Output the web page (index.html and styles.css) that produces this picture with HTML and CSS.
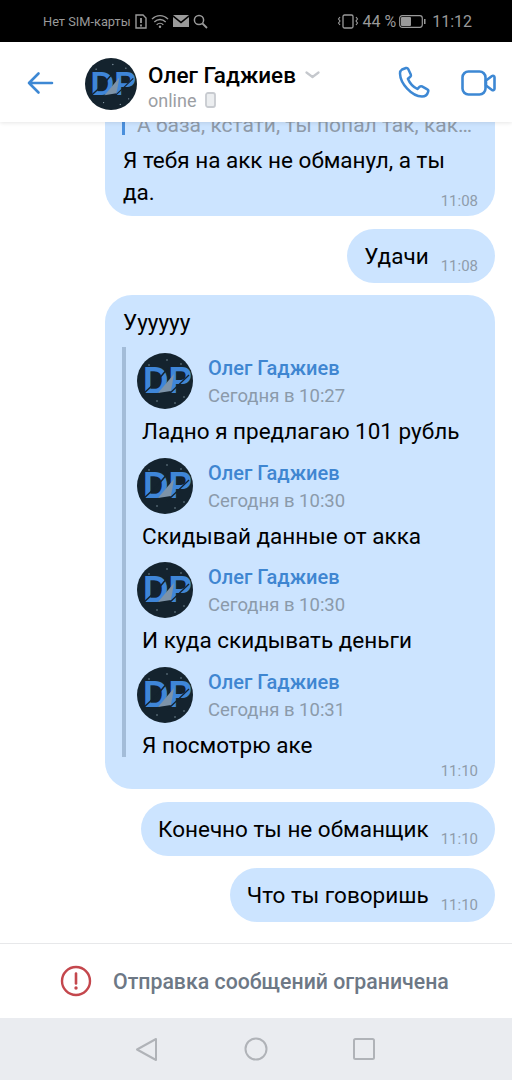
FILE: index.html
```html
<!DOCTYPE html>
<html lang="ru">
<head>
  <meta charset="UTF-8" />
  <title>Олег Гаджиев</title>
  <link rel="stylesheet" href="styles.css">
</head>
<body>

<svg class="defs" width="0" height="0">
  <symbol id="dp" viewBox="0 0 56 56">
    <circle cx="28" cy="28" r="28" fill="#14232e" />
    <circle cx="12" cy="12" r="0.7" fill="#8fa3b0" />
    <circle cx="30" cy="7" r="0.7" fill="#8fa3b0" />
    <circle cx="44" cy="11" r="0.7" fill="#8fa3b0" />
    <circle cx="20" cy="48" r="0.7" fill="#8fa3b0" />
    <circle cx="38" cy="50" r="0.7" fill="#8fa3b0" />
    <circle cx="47" cy="44" r="0.7" fill="#8fa3b0" />
    <text class="dp-text" x="6" y="40" textLength="49" lengthAdjust="spacingAndGlyphs">DP</text>
    <path d="M21 40 L37 21 L34 38 Z" fill="#7d93a8" />
    <path d="M5 42 L20 28 L32 14" stroke="#14232e" stroke-width="1.500" fill="none" />
    <path d="M30 43 L52 22" stroke="#14232e" stroke-width="1.300" fill="none" />
  </symbol>
</svg>

<div class="status-bar">
  <div class="status-left">
    <span class="sim-text">Нет SIM-карты</span>
    <svg width="12" height="15" viewBox="0 0 12 15"><path d="M1 1h7l3 3v10H1z" fill="none" stroke="#9a9a9a" stroke-width="1.400" /><path d="M6 4v5M6 10.500v2" stroke="#9a9a9a" stroke-width="1.800" /></svg>
    <svg width="18" height="15" viewBox="0 0 19 15"><path d="M1 5c5-5 12-5 17 0M3.500 8c3.500-3.500 8.500-3.500 12 0M6 11c2-2 5-2 7 0" fill="none" stroke="#9a9a9a" stroke-width="1.400" /><circle cx="9.500" cy="13" r="1.300" fill="#9a9a9a" /></svg>
    <svg width="16" height="12" viewBox="0 0 16 12"><path d="M0 0h16L8 6.500z" fill="#9a9a9a" /><path d="M0 2v10h16V2L8 8.500z" fill="#9a9a9a" /></svg>
    <svg width="15" height="15" viewBox="0 0 15 15"><circle cx="6" cy="6" r="4.600" fill="none" stroke="#9a9a9a" stroke-width="1.500" /><path d="M9.500 9.500L14 14" stroke="#9a9a9a" stroke-width="1.800" /></svg>
  </div>
  <div class="status-right">
    <svg width="22" height="15" viewBox="0 0 22 15"><rect x="6" y="1" width="10" height="13" rx="1.500" fill="none" stroke="#9a9a9a" stroke-width="1.300" /><path d="M3 3L1.500 5 3 7 1.500 9 3 11M19 3l1.500 2L19 7l1.500 2L19 11" fill="none" stroke="#9a9a9a" stroke-width="1.100" /></svg>
    <span class="status-text">44 %</span>
    <svg width="27" height="13" viewBox="0 0 27 13"><rect x="0.700" y="0.700" width="22.600" height="11.600" rx="2.500" fill="none" stroke="#9a9a9a" stroke-width="1.200" /><rect x="2" y="2" width="10" height="9" rx="1" fill="#9a9a9a" /><rect x="25" y="4" width="1.500" height="5" fill="#9a9a9a" /></svg>
    <span class="status-text clock">11:12</span>
  </div>
</div>

<header class="top-bar">
  <svg class="back" width="28" height="24" viewBox="0 0 28 24"><path d="M26 12H3M12.500 2.500L3 12l9.500 9.500" fill="none" stroke="#3d88d4" stroke-width="2.600" stroke-linecap="round" stroke-linejoin="round" /></svg>
  <svg class="head-avatar"><use href="#dp" /></svg>
  <div class="head-info">
    <div class="head-name">
      Олег Гаджиев
      <svg width="15" height="8" viewBox="0 0 15 8"><path d="M1.500 1.500L7.500 6l6-4.500" fill="none" stroke="#c5c8cd" stroke-width="2.200" stroke-linecap="round" stroke-linejoin="round" /></svg>
    </div>
    <div class="head-online">
      online
      <svg width="11" height="16" viewBox="0 0 11 16"><rect x="1" y="1" width="9" height="14" rx="2" fill="#eceef0" stroke="#c8cbd0" stroke-width="1.800" /></svg>
    </div>
  </div>
  <div class="head-actions">
    <svg width="33" height="34" viewBox="0 0 33 34"><path d="M4 3.500l4-1.500c1-.3 1.700 0 2.200 1l2.600 5.500c.4.9.2 1.600-.5 2.200l-2.400 2c1.800 4.500 5 8 9.500 10.300l2.300-2.300c.7-.6 1.500-.7 2.300-.3l5.300 3c1 .5 1.200 1.300.9 2.200-.9 3.200-3 5-6.200 5C13.500 30.300 2.300 17.500 2 7.500 1.900 5.700 2.600 4.400 4 3.500z" fill="none" stroke="#3d88d4" stroke-width="2.500" stroke-linejoin="round" /></svg>
    <svg width="35" height="26" viewBox="0 0 35 26"><rect x="1.500" y="1.500" width="23" height="23" rx="6" fill="none" stroke="#3d88d4" stroke-width="2.600" /><path d="M25 10.500l6-4.500c1-.7 2.500 0 2.500 1.200v11.600c0 1.200-1.500 1.900-2.500 1.200l-6-4.500z" fill="none" stroke="#3d88d4" stroke-width="2.600" stroke-linejoin="round" /></svg>
  </div>
</header>

<main class="chat">
  <div class="bubble bubble-first">
    <div class="old-quote">А база, кстати, ты попал так, как…</div>
    <div class="msg-text first-text">Я тебя на акк не обманул, а ты<br>да.</div>
    <span class="time">11:08</span>
  </div>

  <div class="bubble bubble-short">
    <span class="msg-text">Удачи</span>
    <span class="time">11:08</span>
  </div>

  <div class="bubble bubble-big">
    <div class="msg-text">Уууууу</div>
    <div class="forward">
      <div class="fwd-item">
        <div class="fwd-head">
          <svg class="fwd-avatar"><use href="#dp" /></svg>
          <div class="fwd-meta">
            <div class="fwd-name">Олег Гаджиев</div>
            <div class="fwd-date">Сегодня в 10:27</div>
          </div>
        </div>
        <div class="msg-text fwd-text">Ладно я предлагаю 101 рубль</div>
      </div>
      <div class="fwd-item">
        <div class="fwd-head">
          <svg class="fwd-avatar"><use href="#dp" /></svg>
          <div class="fwd-meta">
            <div class="fwd-name">Олег Гаджиев</div>
            <div class="fwd-date">Сегодня в 10:30</div>
          </div>
        </div>
        <div class="msg-text fwd-text">Скидывай данные от акка</div>
      </div>
      <div class="fwd-item">
        <div class="fwd-head">
          <svg class="fwd-avatar"><use href="#dp" /></svg>
          <div class="fwd-meta">
            <div class="fwd-name">Олег Гаджиев</div>
            <div class="fwd-date">Сегодня в 10:30</div>
          </div>
        </div>
        <div class="msg-text fwd-text">И куда скидывать деньги</div>
      </div>
      <div class="fwd-item">
        <div class="fwd-head">
          <svg class="fwd-avatar"><use href="#dp" /></svg>
          <div class="fwd-meta">
            <div class="fwd-name">Олег Гаджиев</div>
            <div class="fwd-date">Сегодня в 10:31</div>
          </div>
        </div>
        <div class="msg-text fwd-text">Я посмотрю аке</div>
      </div>
    </div>
    <span class="time">11:10</span>
  </div>

  <div class="bubble bubble-short">
    <span class="msg-text">Конечно ты не обманщик</span>
    <span class="time">11:10</span>
  </div>

  <div class="bubble bubble-short">
    <span class="msg-text">Что ты говоришь</span>
    <span class="time">11:10</span>
  </div>
</main>

<div class="limit-bar">
  <svg width="32" height="32" viewBox="0 0 32 32"><circle cx="16" cy="16" r="14" fill="none" stroke="#c4474d" stroke-width="2.400" /><path d="M16 8.500v10" stroke="#c4474d" stroke-width="2.600" stroke-linecap="round" /><circle cx="16" cy="23" r="1.700" fill="#c4474d" /></svg>
  <span>Отправка сообщений ограничена</span>
</div>

<nav class="nav-bar">
  <svg width="24" height="24" viewBox="0 0 24 24"><path d="M21 2v21L2 12.500z" fill="none" stroke="#b0b3b8" stroke-width="2" stroke-linejoin="round" /></svg>
  <svg width="24" height="24" viewBox="0 0 24 24"><circle cx="12" cy="12" r="10.500" fill="none" stroke="#b0b3b8" stroke-width="2" /></svg>
  <svg width="22" height="22" viewBox="0 0 22 22"><rect x="1" y="1" width="20" height="20" rx="1.500" fill="none" stroke="#b0b3b8" stroke-width="2" /></svg>
</nav>

</body>
</html>
```

FILE: styles.css
```css
html, body {
  margin: 0;
  height: 100%;
}

body {
  width: 512px;
  height: 1080px;
  display: flex;
  flex-direction: column;
  overflow: hidden;
  background: white;
  font-family: Roboto, "Liberation Sans", sans-serif;
}

.defs {
  position: absolute;
}

.dp-text {
  font-family: "Liberation Sans", sans-serif;
  font-size: 36px;
  font-weight: bold;
  fill: #3f86d8;
}

/* status bar */
.status-bar {
  height: 42px;
  flex: none;
  background: black;
  display: flex;
  justify-content: space-between;
  align-items: center;
  padding: 0 40px 0 43px;
  color: #9a9a9a;
}

.status-left, .status-right {
  display: flex;
  align-items: center;
  gap: 4px;
}

.status-right {
  gap: 3px;
}

.sim-text {
  font-size: 12.800px;
}

.status-text {
  font-size: 16px;
}

.clock {
  margin-left: 3px;
}

/* header */
.top-bar {
  height: 80px;
  flex: none;
  box-sizing: border-box;
  display: flex;
  align-items: center;
  padding: 2px 16px 0 26px;
  background: white;
  box-shadow: 0 1px 4px rgb(0 0 0 / 0.1);
  position: relative;
  z-index: 1;
}

.back {
  margin-right: 31px;
}

.head-avatar {
  width: 52px;
  height: 52px;
  margin: 2px 11px 0 0;
}

.head-info {
  flex: 1;
  margin-top: 6px;
}

.head-name {
  display: flex;
  align-items: center;
  gap: 9px;
  font-size: 22.500px;
  font-weight: 500;
  color: black;
}

.head-online {
  display: flex;
  align-items: center;
  gap: 9px;
  margin-top: 2px;
  font-size: 18px;
  color: #9b9ea3;
}

.head-actions {
  display: flex;
  align-items: center;
  gap: 30px;
}

/* messages */
.chat {
  flex: 1;
  min-height: 0;
  overflow: hidden;
  display: flex;
  flex-direction: column;
  justify-content: flex-end;
  align-items: flex-end;
  gap: 12px;
  padding: 0 17px 21px 0;
}

.bubble {
  background: #cce4ff;
  border-radius: 27px;
  box-sizing: border-box;
  flex: none;
}

.bubble-first, .bubble-big {
  width: 390px;
  padding: 0 18px;
  position: relative;
}

.bubble-first {
  height: 94px;
  border-radius: 0 0 27px 27px;
  margin-bottom: 1px;
}

.old-quote {
  height: 13px;
  line-height: 6px;
  padding-left: 12px;
  margin-left: -1px;
  border-left: 3px solid #4a8fdc;
  font-size: 21px;
  color: #8f9aa8;
  white-space: nowrap;
}

.first-text {
  margin-top: 9px;
}

.bubble-short {
  height: 54px;
  display: flex;
  padding: 0 17px;
  align-items: center;
  gap: 12px;
}

.bubble-short .time {
  align-self: flex-end;
  margin-bottom: 8px;
}

.msg-text {
  font-size: 22.500px;
  line-height: 32px;
  color: black;
}

.time {
  font-size: 15px;
  color: #8f9cab;
}

.bubble-first .time, .bubble-big .time {
  position: absolute;
  right: 17px;
}

.bubble-first .time {
  bottom: 6px;
}

.bubble-big .time {
  bottom: 9px;
}

.bubble-big {
  height: 494px;
  padding-top: 11px;
  margin-bottom: 1px;
}

.forward {
  margin-top: 9px;
  height: 410px;
  box-sizing: border-box;
  padding-left: 11px;
  margin-left: -1px;
  border-left: 4px solid #a3bcd8;
  display: flex;
  flex-direction: column;
  gap: 10.500px;
}

.fwd-item {
  height: 94px;
  box-sizing: border-box;
  padding-top: 6px;
}

.fwd-head {
  display: flex;
  align-items: center;
  gap: 15px;
}

.fwd-avatar {
  width: 56px;
  height: 56px;
  flex: none;
}

.fwd-meta {
  padding-top: 2px;
}

.fwd-name {
  font-size: 20px;
  font-weight: 500;
  color: #3f86d1;
  line-height: 24px;
}

.fwd-date {
  font-size: 18.500px;
  color: #8b9aaa;
  line-height: 24px;
  margin-top: 4px;
}

.fwd-text {
  margin-top: 6px;
  margin-left: 5px;
}

/* bottom */
.limit-bar {
  height: 75px;
  flex: none;
  box-sizing: border-box;
  border-top: 1px solid #e7e8ea;
  display: flex;
  align-items: center;
  padding-left: 60px;
  gap: 21px;
  font-size: 21.300px;
  font-weight: 500;
  color: #6d7885;
}

.nav-bar {
  height: 62px;
  flex: none;
  background: #eaecf0;
  display: flex;
  justify-content: center;
  align-items: center;
  gap: 85px;
  padding-right: 2px;
}
```
